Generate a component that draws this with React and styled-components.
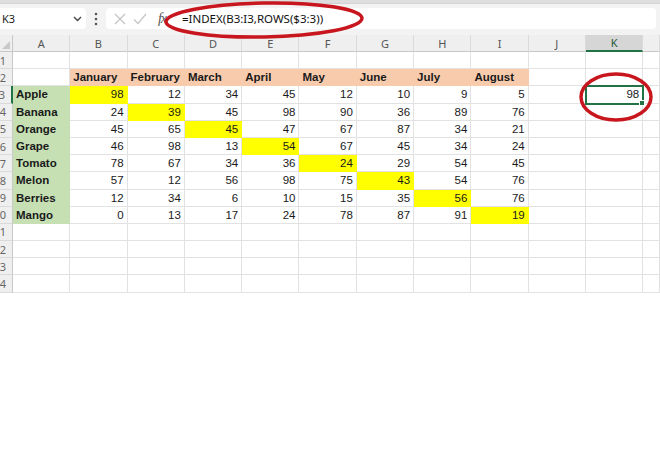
import React from 'react'
import styled, { createGlobalStyle } from 'styled-components'

const GlobalStyle = createGlobalStyle`
  html, body {
    margin: 0;
    padding: 0;
    background: #ffffff;
    overflow: hidden;
  }
`

const months = ['January', 'February', 'March', 'April', 'May', 'June', 'July', 'August']
const letters = ['A', 'B', 'C', 'D', 'E', 'F', 'G', 'H', 'I', 'J', 'K']

const fruits = [
  ['Apple', 98, 12, 34, 45, 12, 10, 9, 5],
  ['Banana', 24, 39, 45, 98, 90, 36, 89, 76],
  ['Orange', 45, 65, 45, 47, 67, 87, 34, 21],
  ['Grape', 46, 98, 13, 54, 67, 45, 34, 24],
  ['Tomato', 78, 67, 34, 36, 24, 29, 54, 45],
  ['Melon', 57, 12, 56, 98, 75, 43, 54, 76],
  ['Berries', 12, 34, 6, 10, 15, 35, 56, 76],
  ['Mango', 0, 13, 17, 24, 78, 87, 91, 19],
]

const fills = {
  peach: '#f8cbad',
  green: '#c6e0b4',
  yellow: '#ffff00',
}

const Page = styled.div`
  position: relative;
  width: 660px;
  height: 464px;
  background: #ffffff;
  font-family: 'Liberation Sans', Arial, sans-serif;
  overflow: hidden;
`

const TopStrip = styled.div`
  height: 3px;
  background: #dedede;
  border-bottom: 1px solid #d4d4d4;
`

const Toolbar = styled.div`
  height: 31px;
  background: #f3f3f3;
  display: flex;
  align-items: flex-start;
  padding: 4px 4px 0 0;
  box-sizing: border-box;
`

const NameBox = styled.div`
  width: 86px;
  height: 21px;
  background: #ffffff;
  border-radius: 0 4px 4px 0;
  display: flex;
  align-items: center;
  justify-content: space-between;
  padding: 0 4px 0 2px;
  box-sizing: border-box;
  font-family: 'Noto Sans', 'Open Sans', sans-serif;
  font-size: 11px;
  color: #222;
`

const Grip = styled.div`
  width: 20px;
  height: 21px;
  display: flex;
  align-items: center;
  justify-content: center;
`

const FormulaBox = styled.div`
  flex: 1;
  height: 21px;
  background: #ffffff;
  border-radius: 4px;
  display: flex;
  align-items: center;
  padding-left: 4px;
  box-sizing: border-box;
`

const IconSlot = styled.span`
  width: ${(p) => p.$w || 20}px;
  display: flex;
  align-items: center;
  justify-content: center;
`

const Fx = styled.span`
  font-family: 'Liberation Serif', 'Times New Roman', serif;
  font-style: italic;
  font-size: 14px;
  color: #555;
  width: 24px;
  text-align: center;
  letter-spacing: -1px;
`

const FormulaText = styled.span`
  font-family: 'Noto Sans', 'Open Sans', sans-serif;
  font-size: 11.5px;
  color: #111;
  margin-left: 8px;
`

const Sheet = styled.div`
  display: grid;
  grid-template-columns: 13px repeat(11, 57.3px) 1fr;
  grid-template-rows: 17px repeat(14, 17.2px);
`

const Corner = styled.div`
  background: #efefef;
  border-right: 1px solid #c8c8c8;
  border-bottom: 1px solid #c8c8c8;
  position: relative;
  &::after {
    content: '';
    position: absolute;
    right: 2px;
    bottom: 2px;
    border-left: 8px solid transparent;
    border-bottom: 8px solid #c9c9c9;
  }
`

const ColHeader = styled.div`
  background: ${(p) => (p.$selected ? '#d6d6d6' : '#efefef')};
  border-right: 1px solid #dadada;
  border-bottom: ${(p) => (p.$selected ? '2px solid #217346' : '1px solid #c8c8c8')};
  box-sizing: border-box;
  display: flex;
  align-items: center;
  justify-content: center;
  font-family: 'Noto Sans', 'Open Sans', sans-serif;
  font-size: 11px;
  color: ${(p) => (p.$selected ? '#1e5b38' : '#555')};
`

const RowHeader = styled.div`
  background: #efefef;
  border-right: ${(p) => (p.$selected ? '2px solid #217346' : '1px solid #c8c8c8')};
  border-bottom: 1px solid #dadada;
  box-sizing: border-box;
  overflow: hidden;
  display: flex;
  align-items: center;
  justify-content: flex-end;
  padding-right: 6px;
  font-family: 'Noto Sans', 'Open Sans', sans-serif;
  font-size: 11px;
  color: #666;
  white-space: nowrap;
`

const Cell = styled.div`
  background: ${(p) => (p.$fill ? fills[p.$fill] : '#ffffff')};
  border-right: 1px solid ${(p) => (p.$fill ? fills[p.$fill] : '#e2e2e2')};
  border-bottom: 1px solid ${(p) => (p.$fill ? fills[p.$fill] : '#e2e2e2')};
  box-sizing: border-box;
  display: flex;
  align-items: center;
  justify-content: ${(p) => (p.$num ? 'flex-end' : 'flex-start')};
  padding: 0 3px;
  font-size: 11.5px;
  font-weight: ${(p) => (p.$bold ? 700 : 400)};
  color: #1a1a1a;
  white-space: nowrap;
  position: relative;
`

const ActiveCell = styled(Cell)`
  outline: 2px solid #217346;
  outline-offset: -1px;
  z-index: 1;
  &::after {
    content: '';
    position: absolute;
    right: -3px;
    bottom: -3px;
    width: 4px;
    height: 4px;
    background: #217346;
    border: 1px solid #ffffff;
  }
`

const Annotation = styled.svg`
  position: absolute;
  left: 0;
  top: 0;
  pointer-events: none;
  z-index: 5;
`

const Chevron = () => (
  <svg width="9" height="6" viewBox="0 0 9 6">
    <path d="M1 1 L4.5 4.5 L8 1" fill="none" stroke="#444" strokeWidth="1.4" />
  </svg>
)

const Dots = () => (
  <svg width="4" height="14" viewBox="0 0 4 14">
    <circle cx="2" cy="2" r="1.3" fill="#555" />
    <circle cx="2" cy="7" r="1.3" fill="#555" />
    <circle cx="2" cy="12" r="1.3" fill="#555" />
  </svg>
)

const Cross = () => (
  <svg width="12" height="12" viewBox="0 0 12 12">
    <path d="M1 1 L11 11 M11 1 L1 11" stroke="#c4c4c4" strokeWidth="1.2" />
  </svg>
)

const Check = () => (
  <svg width="14" height="12" viewBox="0 0 14 12">
    <path d="M1 6.5 L5 10.5 L13 1" fill="none" stroke="#c4c4c4" strokeWidth="1.2" />
  </svg>
)

const renderRow = (r) => {
  const cells = []
  const selectedRow = r === 3
  cells.push(
    <RowHeader key={`h${r}`} $selected={selectedRow}>
      {r}
    </RowHeader>
  )
  for (let c = 0; c < 12; c++) {
    const key = `${r}-${c}`
    if (r === 2 && c >= 1 && c <= 8) {
      cells.push(
        <Cell key={key} $fill="peach" $bold>
          {months[c - 1]}
        </Cell>
      )
    } else if (r >= 3 && r <= 10 && c <= 8) {
      const row = fruits[r - 3]
      if (c === 0) {
        cells.push(
          <Cell key={key} $fill="green" $bold>
            {row[0]}
          </Cell>
        )
      } else {
        cells.push(
          <Cell key={key} $num $fill={c === r - 2 ? 'yellow' : undefined}>
            {row[c]}
          </Cell>
        )
      }
    } else if (r === 3 && c === 10) {
      cells.push(
        <ActiveCell key={key} $num>
          98
        </ActiveCell>
      )
    } else {
      cells.push(<Cell key={key} />)
    }
  }
  return cells
}

const App = () => {
  const rows = []
  for (let r = 1; r <= 14; r++) rows.push(...renderRow(r))

  return (
    <Page>
      <GlobalStyle />
      <TopStrip />
      <Toolbar>
        <NameBox>
          <span>K3</span>
          <Chevron />
        </NameBox>
        <Grip>
          <Dots />
        </Grip>
        <FormulaBox>
          <IconSlot $w={20}>
            <Cross />
          </IconSlot>
          <IconSlot $w={20}>
            <Check />
          </IconSlot>
          <Fx>fx</Fx>
          <FormulaText>=INDEX(B3:I3,ROWS($3:3))</FormulaText>
        </FormulaBox>
      </Toolbar>
      <Sheet>
        <Corner />
        {letters.map((l) => (
          <ColHeader key={l} $selected={l === 'K'}>
            {l}
          </ColHeader>
        ))}
        <ColHeader />
        {rows}
      </Sheet>
      <Annotation width="660" height="464" viewBox="0 0 660 464">
        <ellipse cx="264" cy="20" rx="98" ry="17" fill="none" stroke="#c8161e" strokeWidth="3.5" transform="rotate(-1 264 20)" />
        <ellipse cx="616" cy="97" rx="35" ry="23" fill="none" stroke="#c8161e" strokeWidth="3.5" />
      </Annotation>
    </Page>
  )
}

export default App
